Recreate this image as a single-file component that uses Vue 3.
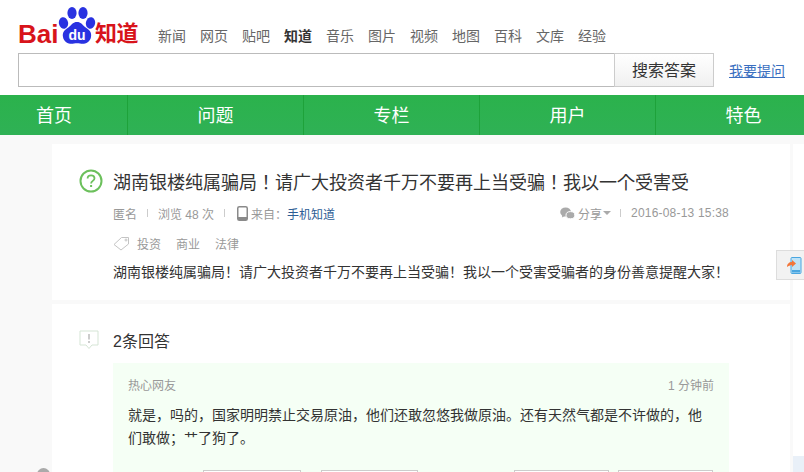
<template>
  <div class="page">
    <div class="header">
      <div class="top-row">
        <div class="logo">
          <svg class="logo-paw" width="38" height="40" viewBox="0 0 38 40">
            <ellipse cx="5.5" cy="17" rx="4.6" ry="5.8" fill="#2932e1" transform="rotate(-12 5.5 17)" />
            <ellipse cx="14" cy="7" rx="4.6" ry="6" fill="#2932e1" />
            <ellipse cx="25" cy="7" rx="4.6" ry="6" fill="#2932e1" />
            <ellipse cx="32.500" cy="17" rx="4.6" ry="5.8" fill="#2932e1" transform="rotate(12 32.500 17)" />
            <path d="M19 16c4 0 5 2.500 8 5 4 2.500 7 5 6 10-1 6-7 7.500-11 6.500-2-.5-4-.5-6 0-4 1-10-.5-11-6.500-1-5 2-7.500 6-10 3-2.500 4-5 8-5z" fill="#2932e1" />
            <text x="19" y="34" text-anchor="middle" class="logo-du">du</text>
          </svg>
          <span class="logo-bai">Bai</span>
          <span class="logo-gap"></span>
          <span class="logo-zhidao">知道</span>
        </div>
        <nav class="channels">
          <a v-for="c in channels" :key="c" :class="{ on: c === '知道' }">{{ c }}</a>
        </nav>
      </div>
      <div class="search-row">
        <div class="search-input"></div>
        <button class="search-btn">搜索答案</button>
        <a class="ask-link">我要提问</a>
      </div>
    </div>

    <div class="green-nav">
      <a v-for="t in tabs" :key="t" class="tab">{{ t }}</a>
    </div>

    <div class="main">
      <div class="column">
        <div class="card question">
          <div class="q-title">
            <svg class="q-icon" width="24" height="24" viewBox="0 0 24 24">
              <circle cx="12" cy="12" r="10.5" fill="none" stroke="#6cc05c" stroke-width="2" />
              <path d="M8.6 9.6c0-2 1.5-3.2 3.5-3.2s3.4 1.2 3.4 2.9c0 2.6-3.4 2.6-3.4 5.2" fill="none" stroke="#6cc05c" stroke-width="1.8" />
              <rect x="11.1" y="16" width="2" height="2" fill="#6cc05c" />
            </svg>
            <h1>湖南银楼纯属骗局！请广大投资者千万不要再上当受骗！我以一个受害受</h1>
          </div>
          <div class="meta">
            <span>匿名</span>
            <i class="sep"></i>
            <span>浏览 48 次</span>
            <i class="sep"></i>
            <svg class="phone" width="11" height="15" viewBox="0 0 11 15">
              <rect x="0.75" y="0.75" width="9.5" height="13.5" rx="1.6" fill="none" stroke="#8a8a8a" stroke-width="1.5" />
              <rect x="1" y="11" width="9" height="3" fill="#8a8a8a" />
            </svg>
            <span class="from">来自：</span><a class="from-link">手机知道</a>
            <span class="spacer"></span>
            <svg class="wechat" width="15" height="13" viewBox="0 0 15 13">
              <ellipse cx="5.6" cy="5" rx="5.4" ry="4.6" fill="#aaa" />
              <path d="M2.5 8l-.6 2.4L5 9z" fill="#aaa" />
              <ellipse cx="10.4" cy="8.2" rx="4.4" ry="3.6" fill="#aaa" stroke="#fff" stroke-width="1" />
            </svg>
            <span class="share">分享</span><i class="caret"></i>
            <i class="sep sep-right"></i>
            <span class="date">2016-08-13 15:38</span>
          </div>
          <div class="tags">
            <svg class="tag-icon" width="17" height="15" viewBox="0 0 17 15">
              <path d="M1 8.5L8.5 1.5h7v6.5L8 14z" fill="none" stroke="#c4c4c4" stroke-width="1" />
              <circle cx="13" cy="4" r="1" fill="none" stroke="#c4c4c4" />
            </svg>
            <a v-for="t in tags" :key="t">{{ t }}</a>
          </div>
          <p class="q-body">湖南银楼纯属骗局！请广大投资者千万不要再上当受骗！我以一个受害受骗者的身份善意提醒大家！</p>
        </div>

        <div class="card answers">
          <div class="a-head">
            <svg class="a-icon" width="20" height="20" viewBox="0 0 20 20">
              <path d="M1 1h18v14h-6l-3 3.5L7 15H1z" fill="none" stroke="#d5e5d5" stroke-width="1" />
              <rect x="9" y="4" width="2" height="5.5" fill="#ccc" />
              <rect x="9" y="11" width="2" height="2" fill="#ccc" />
            </svg>
            <span>2条回答</span>
          </div>
          <div class="a-box">
            <div class="a-top">
              <span>热心网友</span>
              <span class="a-time">1 分钟前</span>
            </div>
            <p class="a-text">就是，吗的，国家明明禁止交易原油，他们还敢忽悠我做原油。还有天然气都是不许做的，他们敢做；艹了狗了。</p>
            <div class="a-actions">
              <span class="a-btn b1"></span>
              <span class="a-btn b2"></span>
              <span class="a-btn b3"></span>
              <span class="a-btn b4"></span>
            </div>
          </div>
        </div>
      </div>
      <aside class="side">
        <div class="side-block"></div>
      </aside>
    </div>

    <div class="float-btn">
      <svg width="15" height="17" viewBox="0 0 15 17">
        <rect x="4" y="0.5" width="10" height="16" rx="1" fill="#bfe3f7" stroke="#4aa6e0" />
        <rect x="5" y="13" width="8" height="2.5" fill="#4aa6e0" />
        <path d="M0 10c0-3 2-5 5-5V3l4 3.5L5 10V8C3 8 1.500 9 0 10z" fill="#f2763a" />
      </svg>
    </div>
    <span class="avatar-dot"></span>
  </div>
</template>

<script setup>
const channels = ['新闻', '网页', '贴吧', '知道', '音乐', '图片', '视频', '地图', '百科', '文库', '经验']
const tabs = ['首页', '问题', '专栏', '用户', '特色']
const tags = ['投资', '商业', '法律']
</script>

<style>
html, body {
  margin: 0;
  overflow: hidden;
  background: #fff;
}
</style>

<style scoped>
.page {
  position: relative;
  width: 804px;
  height: 472px;
  overflow: hidden;
  background: #fff;
  font-family: "Liberation Sans", "Noto Sans CJK SC", sans-serif;
  font-size: 12px;
  color: #333;
}

.header {
  height: 95px;
  padding-left: 18px;
  box-sizing: border-box;
}

.top-row {
  display: flex;
  height: 53px;
}

.logo {
  position: relative;
  display: flex;
  align-items: flex-end;
  width: 140px;
  height: 48px;
  flex-shrink: 0;
  color: #d8141b;
}

.logo-paw {
  position: absolute;
  left: 40px;
  top: 6px;
}

.logo-du {
  font-size: 14px;
  font-weight: bold;
  fill: #fff;
}

.logo-bai {
  font-size: 26px;
  font-weight: bold;
  line-height: 28px;
  width: 41px;
}

.logo-gap {
  width: 36px;
}

.logo-zhidao {
  font-size: 22px;
  font-weight: bold;
  line-height: 28px;
  letter-spacing: -0.5px;
}

.channels {
  display: flex;
  gap: 14px;
  padding-top: 26px;
  font-size: 14px;
  line-height: 20px;
  color: #666;
}

.channels .on {
  color: #333;
  font-weight: bold;
}

.search-row {
  display: flex;
  align-items: center;
  height: 34px;
}

.search-input {
  width: 596px;
  height: 34px;
  box-sizing: border-box;
  border: 1px solid #bbb;
  border-right: none;
  background: #fff;
}

.search-btn {
  width: 100px;
  height: 34px;
  padding: 0 0 2px;
  border: 1px solid #ccc;
  background: linear-gradient(#fff, #f0f0f0);
  font: inherit;
  font-size: 16px;
  color: #333;
}

.ask-link {
  margin-left: 15px;
  font-size: 14px;
  color: #3a6fc0;
  text-decoration: underline;
}

.green-nav {
  display: flex;
  height: 40px;
  background: linear-gradient(#2bb24c, #2fb155);
}

.tab {
  flex: 0 0 176px;
  box-sizing: border-box;
  padding-top: 2px;
  border-left: 1px solid #1ea23a;
  text-align: center;
  font-size: 18px;
  line-height: 38px;
  color: #fff;
}

.tab:first-child {
  flex-basis: 127px;
  border-left: none;
  padding-right: 19px;
}

.main {
  display: flex;
  height: 337px;
  background: #f9f9f9;
}

.column {
  display: flex;
  flex-direction: column;
  gap: 4px;
  width: 738px;
  margin: 9px 3px 0 52px;
}

.side {
  flex: 1;
  margin-top: 9px;
  background: #fff;
}

.side-block {
  height: 20px;
  margin-top: 312px;
  background: #e9f0f8;
}

.card {
  background: #fff;
  flex-shrink: 0;
}

.question {
  height: 156px;
  padding-left: 27px;
  padding-top: 25px;
  box-sizing: border-box;
}

.q-title {
  display: flex;
  align-items: center;
  height: 24px;
}

.q-icon {
  flex-shrink: 0;
  margin-right: 10px;
}

.q-title h1 {
  margin: 0;
  font-family: "Noto Sans CJK JP", sans-serif;
  font-size: 18px;
  font-weight: normal;
  line-height: 24px;
  color: #333;
  white-space: nowrap;
}

.meta {
  display: flex;
  align-items: center;
  height: 20px;
  margin-top: 10px;
  margin-left: 34px;
  margin-right: 61px;
  color: #999;
}

.sep {
  width: 1px;
  height: 8px;
  margin: 0 10px;
  background: #ccc;
}

.phone {
  margin-left: 2px;
  margin-right: 3px;
}

.from-link {
  color: #2e5d95;
}

.spacer {
  flex: 1;
}

.wechat {
  margin-right: 3px;
}

.caret {
  margin-left: 1px;
  border: 4px solid transparent;
  border-top-color: #aaa;
  border-bottom: none;
}

.sep-right {
  margin: 0 10px 0 9px;
}

.date {
  letter-spacing: 0.2px;
}

.tags {
  display: flex;
  align-items: center;
  height: 20px;
  margin: 10px 0 0 34px;
  color: #999;
  gap: 15px;
}

.tag-icon {
  margin-right: -8px;
}

.q-body {
  margin: 9px 0 0 34px;
  font-size: 14px;
  line-height: 20px;
  color: #333;
}

.answers {
  flex: 1;
  padding-left: 27px;
}

.a-head {
  display: flex;
  align-items: center;
  height: 22px;
  margin-top: 25px;
  font-size: 16px;
}

.a-icon {
  margin-right: 14px;
}

.a-box {
  width: 616px;
  height: 120px;
  margin: 12px 0 0 34px;
  padding: 0 15px;
  box-sizing: border-box;
  background: #f5fff5;
}

.a-top {
  display: flex;
  justify-content: space-between;
  padding-top: 14px;
  line-height: 18px;
  color: #999;
}

.a-text {
  margin: 9px 0 0;
  font-size: 14px;
  line-height: 23px;
  color: #333;
}

.a-actions {
  display: flex;
  margin-top: 20px;
}

.a-btn {
  height: 30px;
  box-sizing: border-box;
  border: 1px solid #ccc;
  background: #fff;
}

.b1 { width: 98px; margin-left: 75px; }
.b2 { width: 97px; margin-left: 20px; }
.b3 { width: 95px; margin-left: 96px; }
.b4 { width: 95px; margin-left: 9px; }

.float-btn {
  position: absolute;
  left: 776px;
  top: 250px;
  width: 40px;
  height: 30px;
  box-sizing: border-box;
  border: 1px solid #ddd;
  background: #f2f2f2;
  padding: 6px 0 0 10px;
}

.avatar-dot {
  position: absolute;
  left: 37px;
  top: 468px;
  width: 13px;
  height: 13px;
  border-radius: 50%;
  background: #aaa;
}
</style>
